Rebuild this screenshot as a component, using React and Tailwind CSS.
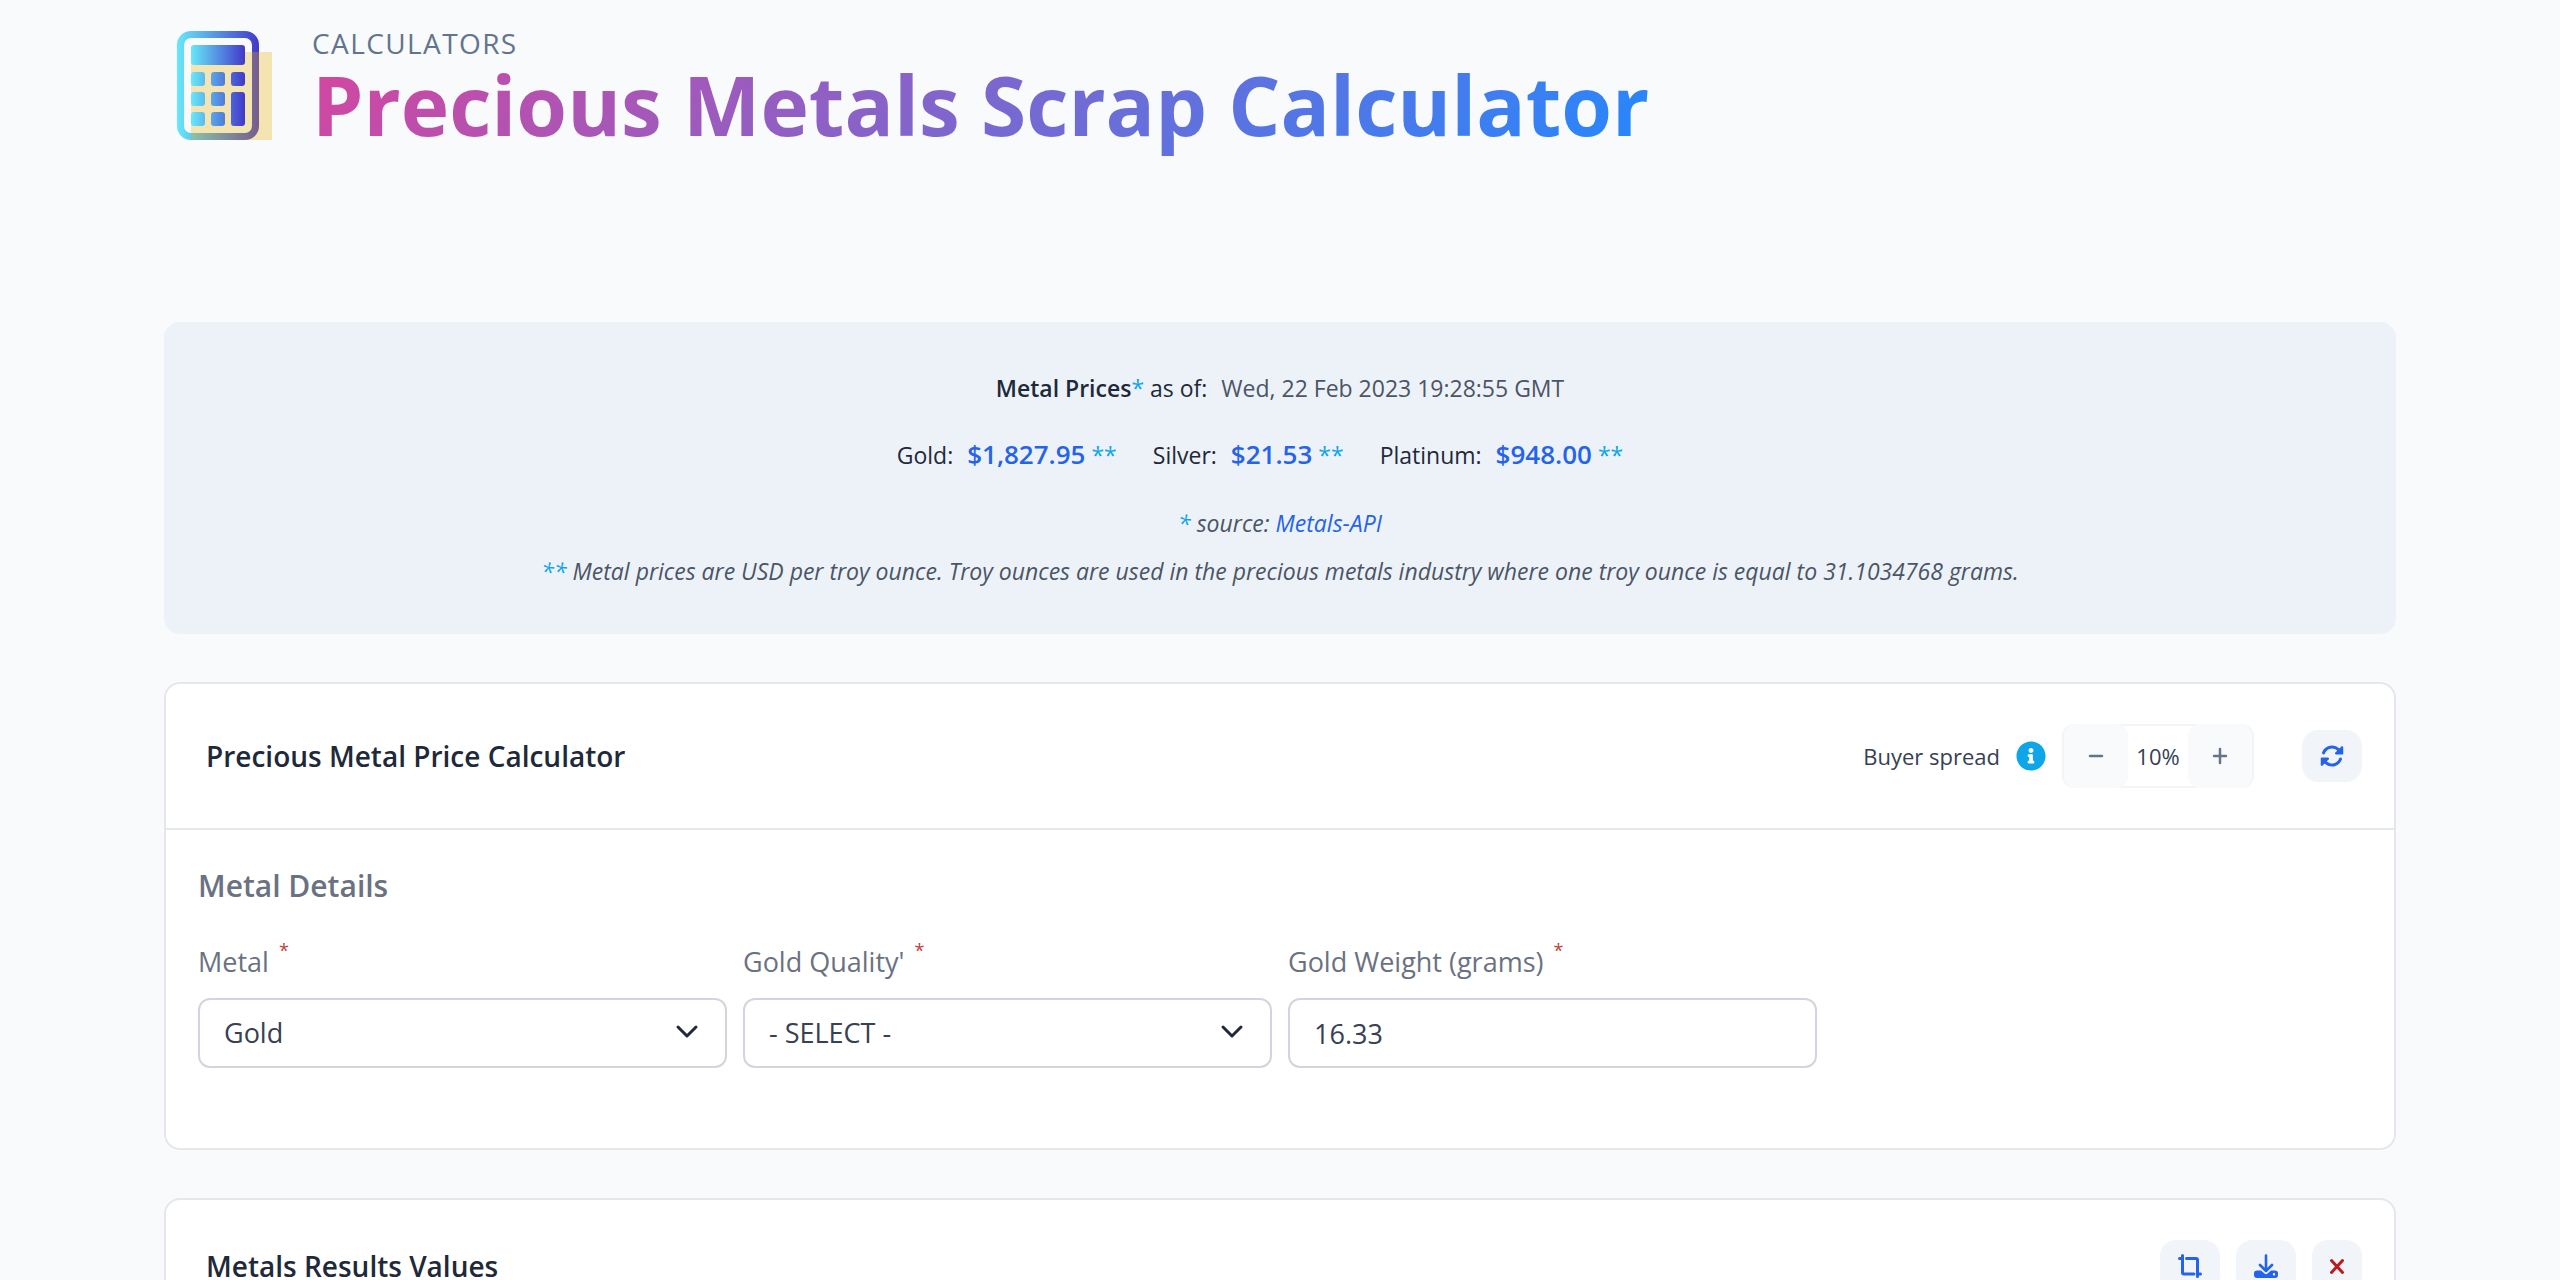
import React from "react";
import { FaInfoCircle } from "react-icons/fa";
import { FaRotate } from "react-icons/fa6";

const control =
  "h-[70px] w-full appearance-none rounded-xl border-2 border-gray-300 bg-white px-6 text-[27px] text-gray-700 outline-none";

function CalculatorLogo() {
  return (
    <svg viewBox="0 0 96 110" className="h-[110px] w-24" aria-hidden="true">
      <defs>
        <linearGradient id="frame" x1="0" x2="1" y1="0" y2="0">
          <stop offset="0" stopColor="#67e8f9" />
          <stop offset="1" stopColor="#4338ca" />
        </linearGradient>
        <linearGradient id="keys" gradientUnits="userSpaceOnUse" x1="14" x2="68" y1="0" y2="0">
          <stop offset="0" stopColor="#67e8f9" />
          <stop offset="1" stopColor="#4338ca" />
        </linearGradient>
      </defs>
      <path fill="url(#frame)" fillRule="evenodd" d="M14 0H68a14 14 0 0 1 14 14V95a14 14 0 0 1-14 14H14A14 14 0 0 1 0 95V14A14 14 0 0 1 14 0ZM14 7a7 7 0 0 0-7 7V95a7 7 0 0 0 7 7H68a7 7 0 0 0 7-7V14a7 7 0 0 0-7-7Z" />
      <rect x="14" y="21" width="81" height="88" fill="#eab308" fillOpacity="0.3" />
      <g fill="url(#keys)">
        <path d="M17 14h48a3 3 0 0 1 3 3v14a3 3 0 0 1-3 3h-48a3 3 0 0 1-3-3v-14a3 3 0 0 1 3-3Z" />
        <path d="M17 41h8a3 3 0 0 1 3 3v8a3 3 0 0 1-3 3h-8a3 3 0 0 1-3-3v-8a3 3 0 0 1 3-3ZM37 41h8a3 3 0 0 1 3 3v8a3 3 0 0 1-3 3h-8a3 3 0 0 1-3-3v-8a3 3 0 0 1 3-3ZM57 41h8a3 3 0 0 1 3 3v8a3 3 0 0 1-3 3h-8a3 3 0 0 1-3-3v-8a3 3 0 0 1 3-3ZM17 61h8a3 3 0 0 1 3 3v8a3 3 0 0 1-3 3h-8a3 3 0 0 1-3-3v-8a3 3 0 0 1 3-3ZM37 61h8a3 3 0 0 1 3 3v8a3 3 0 0 1-3 3h-8a3 3 0 0 1-3-3v-8a3 3 0 0 1 3-3ZM17 81h8a3 3 0 0 1 3 3v8a3 3 0 0 1-3 3h-8a3 3 0 0 1-3-3v-8a3 3 0 0 1 3-3ZM37 81h8a3 3 0 0 1 3 3v8a3 3 0 0 1-3 3h-8a3 3 0 0 1-3-3v-8a3 3 0 0 1 3-3ZM57 61h8a3 3 0 0 1 3 3v28a3 3 0 0 1-3 3h-8a3 3 0 0 1-3-3v-28a3 3 0 0 1 3-3Z" />
      </g>
    </svg>
  );
}

function Field({ id, label, children }) {
  return (
    <div>
      <label htmlFor={id} className="mb-[18px] flex items-start text-[27px] leading-9 text-gray-500">
        {label}
        <span className="ml-2.5 text-lg leading-3 text-[#c2413b]">*</span>
      </label>
      <div className="relative">{children}</div>
    </div>
  );
}

function Select({ id, options }) {
  return (
    <>
      <select id={id} className={control}>
        {options.map((o) => (
          <option key={o}>{o}</option>
        ))}
      </select>
      <svg viewBox="0 0 24 24" className="pointer-events-none absolute top-[21px] right-7 size-6" fill="none" stroke="#1f2937" strokeWidth="3" strokeLinecap="round" strokeLinejoin="round" aria-hidden="true">
        <path d="M3 8l9 9 9-9" />
      </svg>
    </>
  );
}

function Price({ name, value }) {
  return (
    <span>
      {name}: <b className="ml-2 text-[26px] font-semibold text-[#2563eb]">{value}</b>{" "}
      <span className="text-[#0ea5e9]">**</span>
    </span>
  );
}

function IconButton({ label, className, children }) {
  return (
    <button type="button" aria-label={label} className={`flex h-[52px] items-center justify-center rounded-2xl bg-[#f1f5fa] text-[#2563eb] ${className}`}>
      {children}
    </button>
  );
}

export default function App() {
  return (
    <div className="h-screen overflow-hidden bg-[#f8fafc] px-[164px] font-['Open_Sans','Noto_Sans',sans-serif] text-[22px] text-gray-800">
      <header className="flex h-[322px] items-start pt-[31px] pl-[13px]">
        <CalculatorLogo />
        <div className="ml-[39px]">
          <p className="text-[28px] leading-6 tracking-wider text-slate-500">CALCULATORS</p>
          <h1 className="w-fit bg-linear-[135deg,#d4469f,#2388ff] bg-clip-text pr-1 pb-2 text-[82px] leading-[98px] font-bold text-transparent">
            Precious Metals Scrap Calculator
          </h1>
        </div>
      </header>

      <section className="flex h-[312px] flex-col items-center rounded-2xl bg-[#edf2f9] pt-12 text-center text-[23px] leading-9">
        <p>
          <b className="font-semibold">Metal Prices</b>
          <span className="text-[#0ea5e9]">*</span> as of: <span className="ml-2 text-gray-600">Wed, 22 Feb 2023 19:28:55 GMT</span>
        </p>
        <div className="mt-[30px] mr-10 flex gap-9">
          <Price name="Gold" value="$1,827.95" />
          <Price name="Silver" value="$21.53" />
          <Price name="Platinum" value="$948.00" />
        </div>
        <p className="mt-8 text-gray-600 italic">
          <span className="text-[#0ea5e9]">*</span> source: <a href="#metals-api" className="text-[#2563eb]">Metals-API</a>
        </p>
        <p className="mt-3 text-gray-600 italic">
          <span className="text-[#0ea5e9]">**</span> Metal prices are USD per troy ounce. Troy ounces are used in the precious metals industry where one troy ounce is equal to 31.1034768 grams.
        </p>
      </section>

      <section className="mt-12 rounded-2xl border-2 border-gray-200 bg-white">
        <div className="flex h-[146px] items-center justify-between border-b-2 border-gray-200 pr-8 pl-10">
          <h2 className="text-[28px] font-semibold">Precious Metal Price Calculator</h2>
          <div className="flex items-center text-gray-700">
            <span>Buyer spread</span>
            <FaInfoCircle className="ml-4 size-[30px] text-[#0ea5e9]" />
            <div className="ml-4 flex h-16 w-48 items-center justify-between rounded-xl border-2 border-gray-100">
              <button type="button" aria-label="Decrease" className="flex h-16 w-16 items-center justify-center rounded-xl bg-slate-50">
                <svg viewBox="0 0 16 20" className="h-5 w-4" stroke="#64748b" strokeWidth="2.5" strokeLinecap="round"><path d="M2 10h12" /></svg>
              </button>
              <output>10%</output>
              <button type="button" aria-label="Increase" className="flex h-16 w-16 items-center justify-center rounded-xl bg-slate-50">
                <svg viewBox="0 0 16 20" className="h-5 w-4" stroke="#64748b" strokeWidth="2.5" strokeLinecap="round"><path d="M2 10h12M8 3v14" /></svg>
              </button>
            </div>
            <IconButton label="Refresh" className="ml-12 w-[60px]"><FaRotate className="size-6" /></IconButton>
          </div>
        </div>
        <form className="px-8 pt-9 pb-20">
          <h3 className="text-[30px] leading-10 font-semibold text-gray-500">Metal Details</h3>
          <div className="mt-[38px] grid grid-cols-4 gap-4">
            <Field id="metal" label="Metal"><Select id="metal" options={["Gold", "Silver", "Platinum"]} /></Field>
            <Field id="quality" label="Gold Quality'"><Select id="quality" options={["- SELECT -"]} /></Field>
            <Field id="weight" label="Gold Weight (grams)"><input id="weight" type="text" defaultValue="16.33" className={control} /></Field>
          </div>
        </form>
      </section>

      <section className="mt-12 rounded-2xl border-2 border-gray-200 bg-white">
        <div className="flex h-[132px] items-center justify-between pr-8 pl-10">
          <h2 className="text-[28px] font-semibold">Metals Results Values</h2>
          <div className="flex gap-4">
            <IconButton label="Crop" className="w-[60px]">
              <svg viewBox="0 0 24 24" className="size-6" fill="none" stroke="currentColor" strokeWidth="3" strokeLinecap="round" strokeLinejoin="round"><path d="M4.500 1.500V18.500a1.500 1.500 0 0 0 1.500 1.500H16M1.500 4.500H4M8.500 4.500H18a1.500 1.500 0 0 1 1.500 1.500V22.500M22.500 20H20" /></svg>
            </IconButton>
            <IconButton label="Download" className="w-[60px]">
              <svg viewBox="0 0 24 24" className="size-6" fill="none" stroke="currentColor" strokeWidth="2.6" strokeLinecap="round" strokeLinejoin="round"><path d="M12 1.500V16M6 11l6 6 6-6" /><path fill="currentColor" stroke="none" fillRule="evenodd" d="M3 16.500H7L10.500 19.500a2.300 2.300 0 0 0 3 0L17 16.500H21a3 3 0 0 1 3 3V21a3 3 0 0 1-3 3H3a3 3 0 0 1-3-3V19.500a3 3 0 0 1 3-3ZM20 19a1.200 1.200 0 1 0 0 2.400A1.200 1.200 0 0 0 20 19Z" /></svg>
            </IconButton>
            <IconButton label="Close" className="w-[50px]">
              <svg viewBox="0 0 24 24" className="size-6" fill="none" stroke="#b91c1c" strokeWidth="3" strokeLinecap="round"><path d="M6.500 6.500l11 12M17.500 6.500l-11 12" /></svg>
            </IconButton>
          </div>
        </div>
      </section>
    </div>
  );
}
